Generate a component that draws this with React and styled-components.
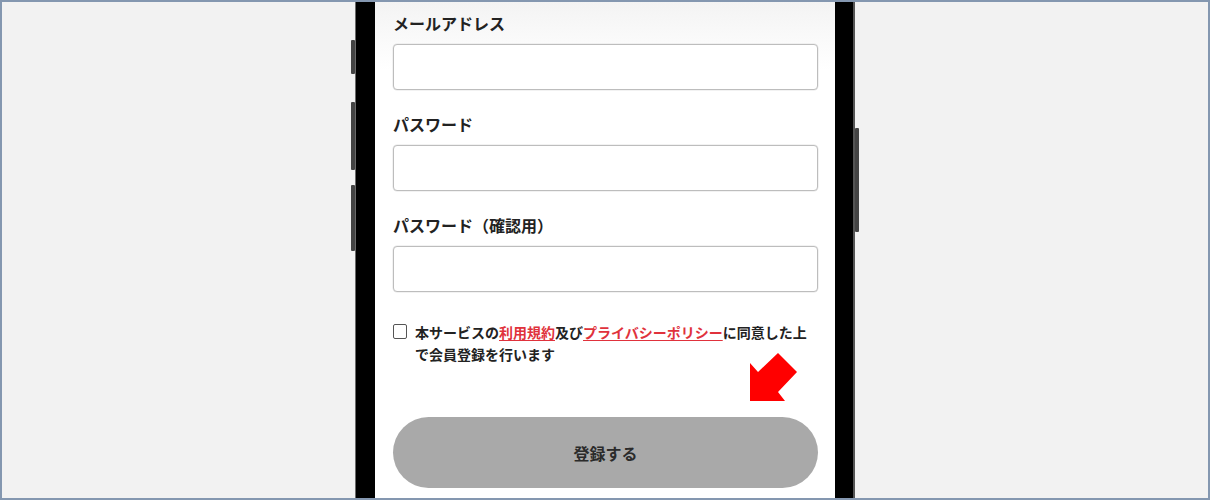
import React from "react";
import styled, { createGlobalStyle } from "styled-components";

const Global = createGlobalStyle`
  html, body { margin: 0; padding: 0; background: #f2f2f2; }
  * { box-sizing: border-box; }
`;

const Frame = styled.div`
  width: 1210px;
  height: 500px;
  border: 2px solid #8497b0;
  background: #f2f2f2;
  overflow: hidden;
  display: flex;
  justify-content: center;
  font-family: "Noto Sans CJK JP", "Noto Sans", sans-serif;
`;

const Phone = styled.div`
  position: relative;
  width: 500px;
  height: 520px;
  margin-top: -2px;
  background: #000;
  border-left: 1px solid #6a6a6a;
  border-right: 2px solid #555;
  padding: 0 18px 0 19px;
`;

const SideButton = styled.div`
  position: absolute;
  width: 4px;
  background: #444;
  border-radius: 1px;
  ${(p) => (p.$right ? "right: -6px;" : "left: -5px;")}
  top: ${(p) => p.$top}px;
  height: ${(p) => p.$h}px;
`;

const Screen = styled.div`
  position: relative;
  height: 100%;
  background: linear-gradient(#f3f3f3 0px, #ffffff 70px);
  padding: 11px 17px 0 18px;
  display: flex;
  flex-direction: column;
`;

const Field = styled.div`
  display: flex;
  flex-direction: column;
  margin-bottom: 22px;
`;

const Label = styled.div`
  font-size: 16px;
  font-weight: 700;
  color: #222;
  line-height: 24px;
  margin-bottom: 9px;
`;

const Input = styled.div`
  height: 46px;
  border: 1px solid #bdbdbd;
  border-radius: 4px;
  background: #fff;
  box-shadow: 0 0 0 0.5px #e6e6e6;
`;

const Agree = styled.div`
  display: flex;
  align-items: flex-start;
  gap: 8px;
  margin-top: 7px;
  padding-right: 8px;
`;

const Check = styled.div`
  flex: none;
  width: 14px;
  height: 15px;
  margin-top: 3px;
  border: 1px solid #555;
  border-radius: 2px;
  background: #fff;
`;

const AgreeText = styled.div`
  font-size: 14px;
  font-weight: 700;
  color: #222;
  line-height: 22px;
`;

const Link = styled.span`
  color: #e0323c;
  text-decoration: underline;
  text-underline-offset: 2px;
`;

const Arrow = styled.svg`
  position: absolute;
  left: 374px;
  top: 351px;
`;

const Submit = styled.div`
  margin-top: 52px;
  height: 71px;
  border-radius: 36px;
  background: #a9a9a9;
  display: flex;
  align-items: center;
  justify-content: center;
  font-size: 16px;
  font-weight: 700;
  color: #2b2b2b;
`;

export default function App() {
  return (
    <>
      <Global />
      <Frame>
        <Phone>
          <SideButton $top={40} $h={34} />
          <SideButton $top={102} $h={68} />
          <SideButton $top={185} $h={66} />
          <SideButton $right $top={128} $h={104} />
          <Screen>
            <Field>
              <Label>メールアドレス</Label>
              <Input />
            </Field>
            <Field>
              <Label>パスワード</Label>
              <Input />
            </Field>
            <Field>
              <Label>パスワード（確認用）</Label>
              <Input />
            </Field>
            <Agree>
              <Check />
              <AgreeText>
                <span>本サービスの</span>
                <Link>利用規約</Link>
                <span>及び</span>
                <Link>プライバシーポリシー</Link>
                <span>に同意した上</span>
                <span>で会員登録を行います</span>
              </AgreeText>
            </Agree>
            <Arrow width="50" height="52" viewBox="0 0 50 52">
              <polygon
                points="1,12 9,21 29,2 48,21 29,41 36,50 1,50"
                fill="#ff0000"
              />
            </Arrow>
            <Submit>登録する</Submit>
          </Screen>
        </Phone>
      </Frame>
    </>
  );
}
